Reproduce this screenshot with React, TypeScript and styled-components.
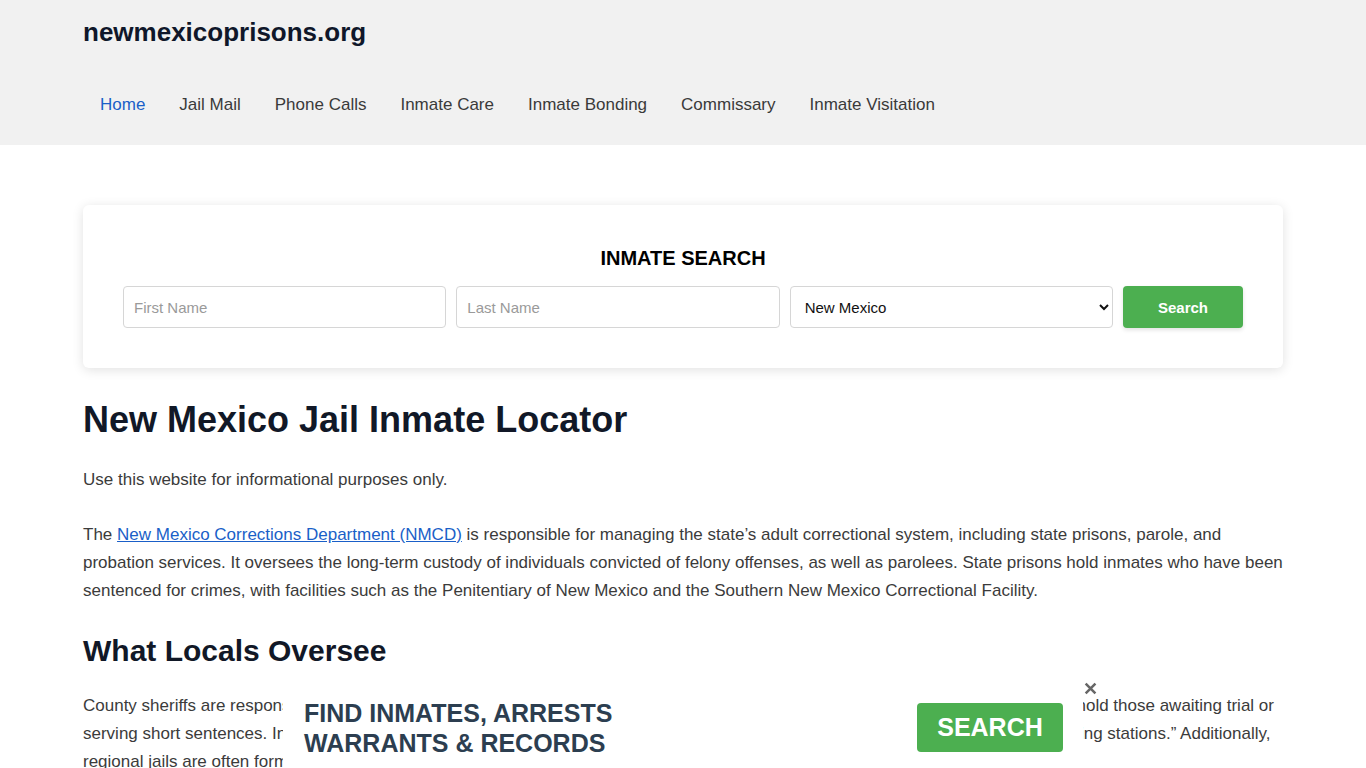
import styled, { createGlobalStyle } from "styled-components";

const GlobalStyle = createGlobalStyle`
  * { box-sizing: border-box; }
  body {
    margin: 0;
    font-family: "Liberation Sans", Arial, sans-serif;
    background: #ffffff;
    color: #333;
  }
`;

const Header = styled.header`
  background-color: #f1f1f1;
  height: 145px;
`;

const Container = styled.div`
  width: 1200px;
  margin: 0 auto;
`;

const Logo = styled.div`
  padding-top: 17px;
  font-size: 26px;
  font-weight: 700;
  color: #0f172a;
  line-height: 30px;
`;

const Nav = styled.nav`
  display: flex;
  margin-top: 46px;
`;

const NavLink = styled.a<{ $active?: boolean }>`
  padding: 0 17px;
  font-size: 17px;
  line-height: 24px;
  color: ${(p) => (p.$active ? "#1a5fc8" : "#3a3a3a")};
  text-decoration: none;
`;

const Main = styled.main`
  padding-top: 60px;
`;

const SearchCard = styled.section`
  background: #fff;
  border-radius: 6px;
  box-shadow: 0 2px 12px rgba(0, 0, 0, 0.12);
  padding: 41px 40px 40px;
  display: flex;
  flex-direction: column;
  align-items: center;
`;

const CardTitle = styled.h3`
  margin: 0 0 16px;
  font-size: 20px;
  font-weight: 700;
  color: #000;
  line-height: 24px;
`;

const Row = styled.div`
  display: flex;
  gap: 10px;
  width: 100%;
`;

const Field = styled.input`
  flex: 1;
  min-width: 0;
  height: 42px;
  border: 1px solid #d6d6d6;
  border-radius: 4px;
  padding: 0 10px;
  font-family: "Liberation Sans", Arial, sans-serif;
  font-size: 15px;
  &::placeholder {
    color: #9a9a9a;
  }
`;

const Select = styled.select`
  flex: 1;
  min-width: 0;
  height: 42px;
  border: 1px solid #d6d6d6;
  border-radius: 4px;
  padding: 0 10px;
  font-family: "Liberation Sans", Arial, sans-serif;
  font-size: 15px;
  color: #111;
  background: #fff;
`;

const SearchButton = styled.button`
  width: 120px;
  height: 42px;
  border: none;
  border-radius: 4px;
  background: #4caf50;
  color: #fff;
  font-family: "Liberation Sans", Arial, sans-serif;
  font-weight: 700;
  font-size: 15px;
  box-shadow: 0 2px 4px rgba(0, 0, 0, 0.12);
`;

const H1 = styled.h1`
  margin: 31px 0 0;
  font-size: 36px;
  line-height: 42px;
  font-weight: 700;
  color: #111827;
`;

const H2 = styled.h2`
  margin: 28px 0 0;
  font-size: 30px;
  line-height: 36px;
  font-weight: 700;
  color: #111827;
`;

const P = styled.p`
  margin: 25px 0 0;
  font-size: 17px;
  line-height: 28px;
  color: #3b3b3b;
  & + & {
    margin-top: 27px;
  }
  ${H2} + & {
    margin-top: 23px;
  }
`;

const Link = styled.a`
  color: #1a5fc8;
  text-decoration: underline;
`;

const AdBar = styled.div`
  position: fixed;
  left: 283px;
  bottom: 0;
  width: 800px;
  height: 85px;
  background: #fff;
  display: flex;
  align-items: center;
  justify-content: space-between;
  padding: 0 20px 0 21px;
`;

const AdText = styled.div`
  font-size: 25px;
  line-height: 30px;
  font-weight: 700;
  color: #2c3e50;
  margin-top: 5px;
`;

const AdButton = styled.button`
  width: 146px;
  height: 49px;
  border: none;
  border-radius: 4px;
  background: #4caf50;
  color: #fff;
  font-family: "Liberation Sans", Arial, sans-serif;
  font-weight: 700;
  font-size: 25px;
  margin-top: 4px;
`;

const Close = styled.span`
  position: fixed;
  left: 1083px;
  top: 679px;
  font-size: 18px;
  font-weight: 700;
  color: #666;
  line-height: 20px;
`;

export default function App() {
  const links = [
    "Home",
    "Jail Mail",
    "Phone Calls",
    "Inmate Care",
    "Inmate Bonding",
    "Commissary",
    "Inmate Visitation",
  ];
  return (
    <>
      <GlobalStyle />
      <Header>
        <Container>
          <Logo>newmexicoprisons.org</Logo>
          <Nav>
            {links.map((l, i) => (
              <NavLink key={l} href="#" $active={i === 0}>
                {l}
              </NavLink>
            ))}
          </Nav>
        </Container>
      </Header>
      <Main>
        <Container>
          <SearchCard>
            <CardTitle>INMATE SEARCH</CardTitle>
            <Row>
              <Field placeholder="First Name" />
              <Field placeholder="Last Name" />
              <Select defaultValue="New Mexico">
                <option>New Mexico</option>
              </Select>
              <SearchButton>Search</SearchButton>
            </Row>
          </SearchCard>
          <H1>New Mexico Jail Inmate Locator</H1>
          <P>Use this website for informational purposes only.</P>
          <P>
            The <Link href="#">New Mexico Corrections Department (NMCD)</Link> is
            responsible for managing the state’s adult correctional system,
            including state prisons, parole, and probation services. It oversees
            the long-term custody of individuals convicted of felony offenses, as
            well as parolees. State prisons hold inmates who have been sentenced
            for crimes, with facilities such as the Penitentiary of New Mexico and
            the Southern New Mexico Correctional Facility.
          </P>
          <H2>What Locals Oversee</H2>
          <P>
            County sheriffs are responsible for managing county jails across the
            state’s 33 counties, which house persons recently arrested and hold
            those awaiting trial or serving short sentences. In addition, certain
            cities and tribal communities also operate their own detention
            facilities, often called “holding stations.” Additionally, regional
            jails are often formed by several counties working together to share
            resources and reduce costs.
          </P>
        </Container>
      </Main>
      <AdBar>
        <AdText>
          FIND INMATES, ARRESTS
          <br />
          WARRANTS &amp; RECORDS
        </AdText>
        <AdButton>SEARCH</AdButton>
      </AdBar>
      <Close>✕</Close>
    </>
  );
}
